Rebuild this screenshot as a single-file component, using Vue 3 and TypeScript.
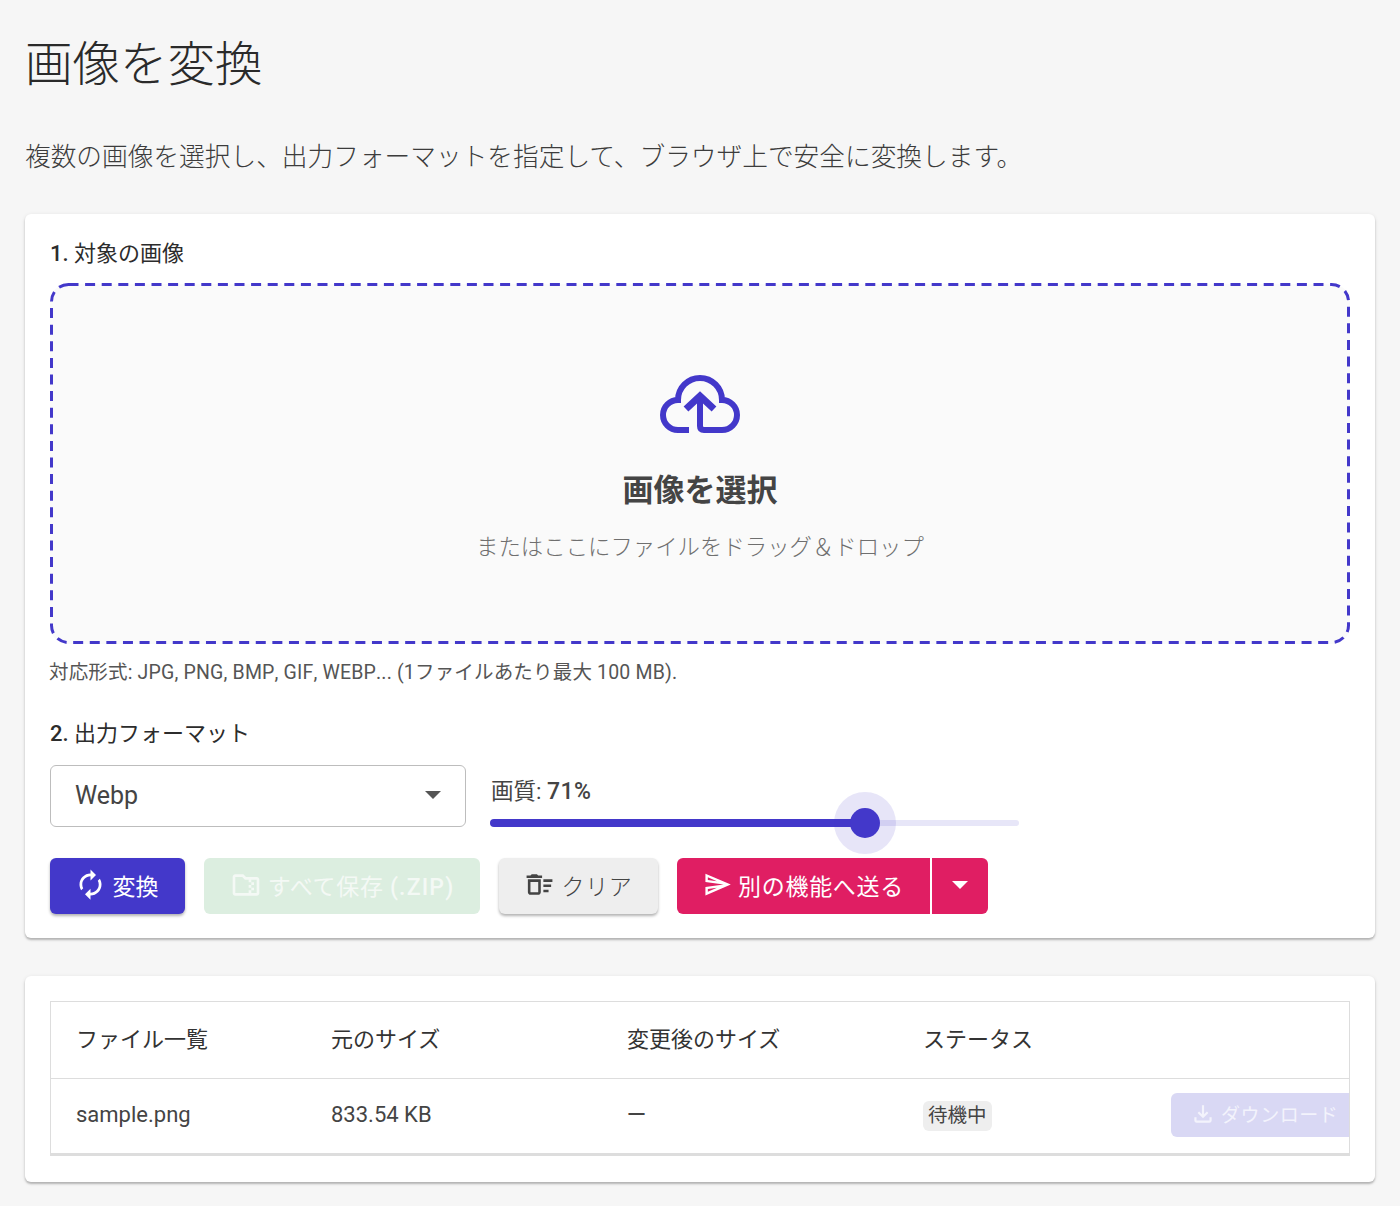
<script setup lang="ts">
interface ActionIcon {
  path: string
}

const sendIcon: ActionIcon = {
  path: 'M4.01 6.03l7.51 3.22-7.52-1 .01-2.22m7.5 8.72L4 17.97v-2.22l7.51-1M2.01 3L2 10l15 2-15 2 .01 7L23 12 2.01 3z',
}

const quality = 71
</script>

<template>
  <div class="page">
    <h1 class="title">画像を変換</h1>
    <p class="lead">複数の画像を選択し、出力フォーマットを指定して、ブラウザ上で安全に変換します。</p>

    <section class="card main-card">
      <h2 class="label"><span class="latin">1.</span> 対象の画像</h2>
      <div class="dropzone">
        <svg class="dash" width="1300" height="361" fill="none">
          <rect x="1.5" y="1.5" width="1297" height="358" rx="17" stroke="#4338ca" stroke-width="3" stroke-dasharray="10 6.6" />
        </svg>
        <svg class="cloud" width="80" height="58" viewBox="0 0 80 58" fill="none" stroke="#4338ca" stroke-width="6">
          <path d="M29 55H18A15 15 0 0 1 18 25A22 22 0 0 1 62 25A15 15 0 0 1 62 55H44Q40 55 40 51V22" />
          <path d="M26 34L40 21L54 34" stroke-width="7" />
        </svg>
        <div class="drop-title">画像を選択</div>
        <div class="drop-sub">またはここにファイルをドラッグ＆ドロップ</div>
      </div>
      <p class="hint">対応形式: JPG, PNG, BMP, GIF, WEBP... (1ファイルあたり最大 100 MB).</p>

      <h2 class="label second"><span class="latin">2.</span> 出力フォーマット</h2>
      <div class="format-row">
        <div class="select">
          <span>Webp</span>
          <i class="caret"></i>
        </div>
        <div class="quality">
          <div class="quality-label">画質: <span class="latin percent">{{ quality }}%</span></div>
          <div class="slider">
            <div class="slider-rail"></div>
            <div class="slider-track" :style="{ width: quality + '%' }"></div>
            <div class="slider-thumb" :style="{ left: quality + '%' }"></div>
          </div>
        </div>
      </div>

      <div class="actions">
        <button class="btn btn-primary">
          <svg width="33" height="33" viewBox="0 0 24 24" fill="currentColor"><path d="M12 6v3l4-4-4-4v3c-4.42 0-8 3.58-8 8 0 1.57.46 3.03 1.24 4.26L6.7 14.8c-.45-.83-.7-1.79-.7-2.8 0-3.31 2.69-6 6-6zm6.76 1.74L17.3 9.2c.44.84.7 1.79.7 2.8 0 3.31-2.69 6-6 6v-3l-4 4 4 4v-3c4.42 0 8-3.58 8-8 0-1.57-.46-3.03-1.24-4.26z" /></svg>
          変換
        </button>
        <button class="btn btn-zip">
          <svg width="32" height="32" viewBox="0 0 24 24" fill="currentColor"><path d="M20 6h-8l-2-2H4c-1.1 0-1.99.9-1.99 2L2 18c0 1.1.9 2 2 2h16c1.1 0 2-.9 2-2V8c0-1.1-.9-2-2-2zm-4 10h2v-2h-2v-2h2v-2h-2V8h4v10h-4v-2zm0 0h-2v2H4V6h5.17l2 2H14v2h2v2h-2v2h2v2z" /></svg>
          <span>すべて保存 <span class="latin zip-ext">(.ZIP)</span></span>
        </button>
        <button class="btn btn-clear">
          <svg width="31" height="31" viewBox="0 0 24 24" fill="currentColor"><path d="M15 16h4v2h-4zm0-8h7v2h-7zm0 4h6v2h-6zM3 18c0 1.1.9 2 2 2h6c1.1 0 2-.9 2-2V8H3v10zm2-8h6v8H5v-8zm5-6H6L5 5H2v2h12V5h-3z" /></svg>
          クリア
        </button>
        <div class="split">
          <button class="btn btn-send">
            <svg width="29" height="29" viewBox="0 0 24 24" fill="currentColor"><path :d="sendIcon.path" /></svg>
            別の機能へ送る
          </button>
          <button class="btn btn-more"><i class="caret caret-white"></i></button>
        </div>
      </div>
    </section>

    <section class="card list-card">
      <div class="table-wrap">
        <table class="files">
          <thead>
            <tr>
              <th class="col-name">ファイル一覧</th>
              <th class="col-size">元のサイズ</th>
              <th class="col-size">変更後のサイズ</th>
              <th class="col-status">ステータス</th>
              <th></th>
            </tr>
          </thead>
          <tbody>
            <tr>
              <td>sample.png</td>
              <td>833.54 KB</td>
              <td><span class="dash-cell">—</span></td>
              <td class="cell-status"><span class="status">待機中</span></td>
              <td class="cell-action">
                <button class="download">
                  <svg width="26" height="26" viewBox="0 0 24 24" fill="currentColor"><path d="M18 15v3H6v-3H4v3c0 1.1.9 2 2 2h12c1.1 0 2-.9 2-2v-3h-2zm-1-4l-1.41-1.41L13 12.17V4h-2v8.17L8.41 9.59 7 11l5 5 5-5z" /></svg>
                  ダウンロード
                </button>
              </td>
            </tr>
          </tbody>
        </table>
      </div>
    </section>
  </div>
</template>

<style>
html,
body {
  margin: 0;
  background: #f6f6f6;
}
</style>

<style scoped>
.page {
  box-sizing: border-box;
  height: 1206px;
  padding: 27px 25px 0;
  overflow: hidden;
  font-family: Roboto, "Noto Sans CJK JP", sans-serif;
  color: #3f3f3f;
}

.title {
  margin: 0;
  font-size: 47.5px;
  line-height: 76px;
  font-weight: 300;
  color: #2a2a2a;
}

.lead {
  margin: 29px 0 0;
  font-size: 25.7px;
  line-height: 50px;
  font-weight: 300;
  color: #3c3c3c;
}

.card {
  background: #fff;
  border-radius: 6px;
  box-shadow: 0 2px 2px rgba(0, 0, 0, 0.22), 0 1px 4px rgba(0, 0, 0, 0.1);
}

.main-card {
  box-sizing: border-box;
  height: 724px;
  margin-top: 32px;
  padding: 24px 25px 25px;
}

.label {
  margin: 0;
  font-size: 22px;
  line-height: 32px;
  font-weight: 400;
  color: #2c2c2c;
}

.label.second {
  margin-top: 30px;
}

.latin {
  font-weight: 500;
}

.dropzone {
  position: relative;
  box-sizing: border-box;
  height: 360px;
  margin-top: 14px;
  border-radius: 18px;
  background: #fafafa;
  display: flex;
  flex-direction: column;
  align-items: center;
  padding-top: 91px;
}

.dash {
  position: absolute;
  top: -1px;
  left: 0;
}

.drop-title {
  margin-top: 35px;
  font-size: 31px;
  line-height: 46px;
  font-weight: 700;
  color: #444;
}

.drop-sub {
  margin-top: 16px;
  font-size: 22.4px;
  line-height: 34px;
  font-weight: 300;
  color: #6f6f6f;
}

.hint {
  margin: 14px 0 0 -1px;
  font-size: 19.5px;
  line-height: 30px;
  font-weight: 400;
  font-kerning: none;
  letter-spacing: 0.009em;
  color: #555;
}

.format-row {
  display: flex;
  margin-top: 15px;
  gap: 24px;
  align-items: flex-start;
}

.select {
  box-sizing: border-box;
  width: 416px;
  height: 62px;
  padding: 0 24px 2px;
  display: flex;
  align-items: center;
  justify-content: space-between;
  border: 1.5px solid #bdbdbd;
  border-radius: 6px;
  font-size: 25px;
  color: #444;
}

.caret {
  display: block;
  width: 0;
  height: 0;
  border-left: 8px solid transparent;
  border-right: 8px solid transparent;
  border-top: 8px solid #555;
}

.caret-white {
  border-top-color: #fff;
}

.quality {
  width: 529px;
}

.quality-label {
  margin-top: 8px;
  padding-left: 1px;
  font-size: 22.5px;
  line-height: 36px;
  color: #444;
}

.percent {
  font-size: 23px;
  letter-spacing: 0.02em;
}

.slider {
  position: relative;
  height: 8px;
  margin-top: 9px;
}

.slider-rail {
  position: absolute;
  top: 1px;
  left: 0;
  right: 0;
  height: 6px;
  border-radius: 3px;
  background: #e7e6f8;
}

.slider-track {
  position: absolute;
  top: 0;
  left: 0;
  height: 8px;
  border-radius: 4px;
  background: #4338ca;
}

.slider-thumb {
  position: absolute;
  top: 4px;
  width: 30px;
  height: 30px;
  margin-left: -1px;
  border-radius: 50%;
  background: #4338ca;
  box-shadow: 0 0 0 16px rgba(67, 56, 202, 0.13);
  transform: translate(-50%, -50%);
}

.actions {
  display: flex;
  gap: 19px;
  margin-top: 31px;
}

.btn {
  box-sizing: border-box;
  height: 56px;
  display: inline-flex;
  align-items: center;
  justify-content: center;
  gap: 6px;
  padding: 0 0 3px;
  border: 0;
  border-radius: 6px;
  font-family: inherit;
  font-size: 23px;
  letter-spacing: 0.03em;
  white-space: nowrap;
}

.btn-primary {
  width: 135px;
  padding-right: 3px;
  background: #4338ca;
  color: #fff;
  letter-spacing: 0;
  box-shadow: 0 2px 3px rgba(0, 0, 0, 0.3);
}

.btn-zip {
  width: 276px;
  background: #dceee0;
  color: #f4f9f5;
}

.zip-ext {
  letter-spacing: 0.05em;
}

.btn-clear {
  width: 159px;
  background: #eeeeee;
  color: #444;
  font-weight: 300;
  box-shadow: 0 2px 3px rgba(0, 0, 0, 0.3);
}

.split {
  display: flex;
  gap: 2px;
}

.btn-send {
  width: 253px;
  background: #e01e63;
  color: #fff;
  border-radius: 6px 0 0 6px;
}

.btn-more {
  width: 56px;
  background: #e01e63;
  border-radius: 0 6px 6px 0;
}

.list-card {
  box-sizing: border-box;
  height: 206px;
  margin-top: 38px;
  padding: 25px;
}

.table-wrap {
  box-sizing: border-box;
  width: 1300px;
  height: 155px;
  border: 1px solid #ddd;
  border-bottom-width: 3px;
  overflow: hidden;
}

.files {
  width: 1299px;
  table-layout: fixed;
  border-collapse: collapse;
  font-size: 22px;
  color: #444;
}

.files th {
  height: 70px;
  padding: 0 0 6px 25px;
  border-bottom: 1px solid #ddd;
  text-align: left;
  font-weight: 400;
  font-size: 22px;
  color: #333;
}

.files td {
  height: 71px;
  padding: 0 0 4px 25px;
}

.dash-cell {
  display: inline-block;
  transform: scaleX(1.1);
  transform-origin: left;
  font-weight: 500;
}

.col-name {
  width: 230px;
}

.col-size {
  width: 271px;
}

.col-status {
  width: 223px;
}

.files td.cell-status {
  height: 74px;
  padding-bottom: 1px;
}

.status {
  display: inline-block;
  padding: 0 5px;
  border-radius: 6px;
  background: #eeeeee;
  font-size: 19.5px;
  line-height: 30px;
}

.files td.cell-action {
  height: 71px;
  padding: 0 0 4px;
}

.download {
  box-sizing: border-box;
  width: 190px;
  height: 44px;
  margin-left: 25px;
  padding: 0 0 2px 19px;
  display: flex;
  align-items: center;
  gap: 5px;
  border: 0;
  border-radius: 6px;
  background: #d9d8f4;
  color: #f3f3fc;
  font-family: inherit;
  font-size: 19px;
  letter-spacing: 0.03em;
  white-space: nowrap;
}
</style>
